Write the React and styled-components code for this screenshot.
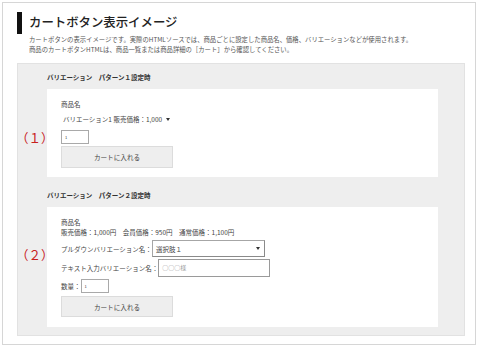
import styled, { createGlobalStyle } from "styled-components";

const GlobalStyle = createGlobalStyle`
  html, body {
    margin: 0;
    padding: 0;
    background: #fff;
  }
  body {
    font-family: "Noto Sans CJK JP", "Noto Sans", sans-serif;
    color: #333;
  }
`;

const Frame = styled.div`
  margin: 2px 0 0 2px;
  border: 1px solid #d6d6d6;
  padding: 9px 0 0 14px;
  box-sizing: content-box;
  width: 458px;
  height: 332px;
`;

const Title = styled.h2`
  margin: 0;
  border-left: 5px solid #111;
  padding-left: 7px;
  height: 22px;
  line-height: 21px;
  font-size: 12.4px;
  font-weight: 500;
  color: #222;
`;

const Desc = styled.p`
  margin: 1px 0 0 12px;
  font-size: 6.35px;
  line-height: 10px;
  color: #555;
`;

const Panel = styled.div`
  margin-top: 8px;
  width: 448px;
  background: #eeeeee;
  border: 1px solid #e2e2e2;
  padding: 0 0 8px 29px;
  box-sizing: border-box;
`;

const SectionTitle = styled.div`
  padding-top: 9px;
  margin: 0 0 8px 0;
  font-size: 6.5px;
  line-height: 8px;
  font-weight: bold;
  color: #333;
`;

const Box = styled.div`
  position: relative;
  width: 391px;
  background: #fff;
  padding: 11px 14px ${(p) => p.$bottom}px;
  margin-bottom: ${(p) => p.$gap}px;
  box-sizing: border-box;
  display: flex;
  flex-direction: column;
  align-items: flex-start;
  font-size: 6.5px;
  line-height: 8px;
  color: #444;
`;

const Marker = styled.span`
  position: absolute;
  left: -31px;
  top: ${(p) => p.$top}px;
  font-size: 12.5px;
  line-height: 16px;
  color: #c8201c;
`;

const Line = styled.div`
  margin-top: ${(p) => p.$mt || 0}px;
  white-space: nowrap;
`;

const Arrow = styled.i`
  display: inline-block;
  width: 0;
  height: 0;
  border-left: 2px solid transparent;
  border-right: 2px solid transparent;
  border-top: 3px solid #333;
`;

const PlainSelect = styled.div`
  margin-top: 5px;
  height: 12px;
  line-height: 12px;
  padding-left: 2px;
  display: flex;
  align-items: center;
  gap: 4px;
  color: #444;
`;

const QtyInput = styled.div`
  margin-top: ${(p) => p.$mt}px;
  width: 28px;
  height: 14px;
  border: 1px solid #a9a9a9;
  box-sizing: border-box;
  font-size: 4px;
  line-height: 12px;
  padding-left: 3px;
  color: #333;
`;

const CartButton = styled.div`
  margin-top: ${(p) => p.$mt}px;
  width: 112px;
  height: ${(p) => p.$h}px;
  background: #eeeeee;
  border: 1px solid #dcdcdc;
  box-sizing: border-box;
  display: flex;
  align-items: center;
  justify-content: center;
  font-size: 6.6px;
  color: #444;
`;

const FieldRow = styled.div`
  margin-top: ${(p) => p.$mt}px;
  display: flex;
  align-items: center;
  white-space: nowrap;
`;

const SelectBox = styled.div`
  width: 113px;
  height: 17px;
  border: 1px solid #a6a6a6;
  border-right-color: #8a8a8a;
  border-bottom-color: #8a8a8a;
  box-sizing: border-box;
  display: flex;
  align-items: center;
  justify-content: space-between;
  padding: 0 4px 0 3px;
  color: #444;
`;

const TextBox = styled.div`
  width: 112px;
  height: 18px;
  border: 1px solid #9a9a9a;
  box-sizing: border-box;
  display: flex;
  align-items: center;
  padding-left: 3px;
  color: #999;
  font-size: 6px;
`;

const Section = ({ title, children }) => (
  <>
    <SectionTitle>{title}</SectionTitle>
    {children}
  </>
);

const App = () => {
  return (
    <>
      <GlobalStyle />
      <Frame>
        <Title>カートボタン表示イメージ</Title>
        <Desc>
          カートボタンの表示イメージです。実際のHTMLソースでは、商品ごとに設定した商品名、価格、バリエーションなどが使用されます。
          <br />
          商品のカートボタンHTMLは、商品一覧または商品詳細の［カート］から確認してください。
        </Desc>
        <Panel>
          <Section title="バリエーション　パターン１設定時">
            <Box $bottom={9} $gap={5}>
              <Marker $top={41}>（１）</Marker>
              <Line>商品名</Line>
              <PlainSelect>
                バリエーション1 販売価格：1,000 <Arrow />
              </PlainSelect>
              <QtyInput $mt={5}>1</QtyInput>
              <CartButton $mt={2} $h={22}>
                カートに入れる
              </CartButton>
            </Box>
          </Section>
          <Section title="バリエーション　パターン２設定時">
            <Box $bottom={10} $gap={0}>
              <Marker $top={40}>（２）</Marker>
              <Line>商品名</Line>
              <Line $mt={2}>
                販売価格：1,000円　会員価格：950円　通常価格：1,100円
              </Line>
              <FieldRow $mt={4}>
                プルダウンバリエーション名：
                <SelectBox>
                  選択肢１<Arrow />
                </SelectBox>
              </FieldRow>
              <FieldRow $mt={2}>
                テキスト入力バリエーション名：
                <TextBox>○○○様</TextBox>
              </FieldRow>
              <FieldRow $mt={2}>
                数量：
                <QtyInput $mt={0}>1</QtyInput>
              </FieldRow>
              <CartButton $mt={3} $h={21}>
                カートに入れる
              </CartButton>
            </Box>
          </Section>
        </Panel>
      </Frame>
    </>
  );
};

export default App;
